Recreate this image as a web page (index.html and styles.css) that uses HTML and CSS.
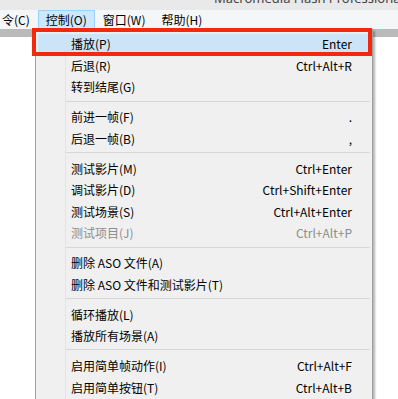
FILE: index.html
```html
<!DOCTYPE html>
<html lang="zh-CN">
<head>
  <meta charset="UTF-8" />
  <meta name="viewport" content="width=device-width, initial-scale=1.0" />
  <title>控制菜单 - Macromedia Flash Professional</title>
  <link rel="stylesheet" href="styles.css">
</head>
<body>
  <div class="titlebar"><span class="title-text">Macromedia Flash Professional 8</span></div>

  <div class="menubar">
    <span class="menu first">令(C)</span>
    <span class="menu open">控制(O)</span>
    <span class="menu">窗口(W)</span>
    <span class="menu">帮助(H)</span>
  </div>

  <div class="workspace">
    <div class="band"></div>
  </div>

  <div class="dropdown">
    <div class="item active"><span>播放(P)</span><span class="key">Enter</span></div>
    <div class="item"><span>后退(R)</span><span class="key">Ctrl+Alt+R</span></div>
    <div class="item"><span>转到结尾(G)</span><span class="key"></span></div>
    <div class="sep"></div>
    <div class="item"><span>前进一帧(F)</span><span class="key">.</span></div>
    <div class="item"><span>后退一帧(B)</span><span class="key">,</span></div>
    <div class="sep"></div>
    <div class="item"><span>测试影片(M)</span><span class="key">Ctrl+Enter</span></div>
    <div class="item"><span>调试影片(D)</span><span class="key">Ctrl+Shift+Enter</span></div>
    <div class="item"><span>测试场景(S)</span><span class="key">Ctrl+Alt+Enter</span></div>
    <div class="item disabled"><span>测试项目(J)</span><span class="key">Ctrl+Alt+P</span></div>
    <div class="sep"></div>
    <div class="item"><span>删除&nbsp;ASO&nbsp;文件(A)</span><span class="key"></span></div>
    <div class="item"><span>删除&nbsp;ASO&nbsp;文件和测试影片(T)</span><span class="key"></span></div>
    <div class="sep"></div>
    <div class="item"><span>循环播放(L)</span><span class="key"></span></div>
    <div class="item"><span>播放所有场景(A)</span><span class="key"></span></div>
    <div class="sep"></div>
    <div class="item"><span>启用简单帧动作(I)</span><span class="key">Ctrl+Alt+F</span></div>
    <div class="item"><span>启用简单按钮(T)</span><span class="key">Ctrl+Alt+B</span></div>
    <div class="item checked"><span class="check"></span></div>
  </div>

  <div class="callout"></div>
</body>
</html>
```

FILE: styles.css
```css
:root{--menu:#f0f0f0;--hover:#cce4f7;--line:#a0a0a0;--red:#f2290e}
*{box-sizing:border-box}
html,body{margin:0;width:398px;height:399px;overflow:hidden}
body{position:relative;background:#fff;color:#000;font-family:"Noto Sans CJK SC","Noto Sans",sans-serif;font-size:12px}

.titlebar{height:10px;background:#e9e9e9;overflow:hidden;padding-left:214px;white-space:nowrap}
.title-text{display:block;font-family:"Noto Sans","Noto Sans CJK SC",sans-serif;font-size:13px;line-height:13px;margin-top:-8px;color:#444}

.menubar{height:19px;background:#f5f6f7;display:flex;align-items:stretch}
.menu{padding:0 7px;line-height:18px;border:1px solid transparent;border-bottom:none}
.menu.first{margin-left:-6px}
.menu.open{background:#cce8ff;border-color:#99d1ff}

.workspace{height:370px;background:#fff}
.band{height:8px;background:#bababa}

.dropdown{position:absolute;left:35px;top:29px;width:338px;height:370px;overflow:hidden;padding:3px 2px 0 1px;background:var(--menu);background-image:linear-gradient(to right,transparent 29px,#e3e3e3 29px,#e3e3e3 30px,transparent 30px);border:1px solid var(--line);border-bottom:none;box-shadow:2px 2px 2px rgba(0,0,0,.3)}
.item{display:flex;align-items:center;justify-content:space-between;height:21.6px;padding:0 17px 0 33px;border:1px solid transparent;white-space:nowrap}
.item.active{background:var(--hover);border-color:#e2eef9}
.item.disabled{color:#8d8d8d}
.key{text-align:right}
.sep{height:8.2px;padding-top:3px;margin-left:29px}
.sep::before{content:"";display:block;height:1px;background:#d7d7d7}
.item.checked{justify-content:flex-start;padding-left:1px;align-items:flex-start}
.check{width:22px;height:22px;background:#cce8ff;border:1px solid #90c8f6}

.callout{position:absolute;left:32px;top:28px;width:340px;height:28px;border:4px solid var(--red)}
```
